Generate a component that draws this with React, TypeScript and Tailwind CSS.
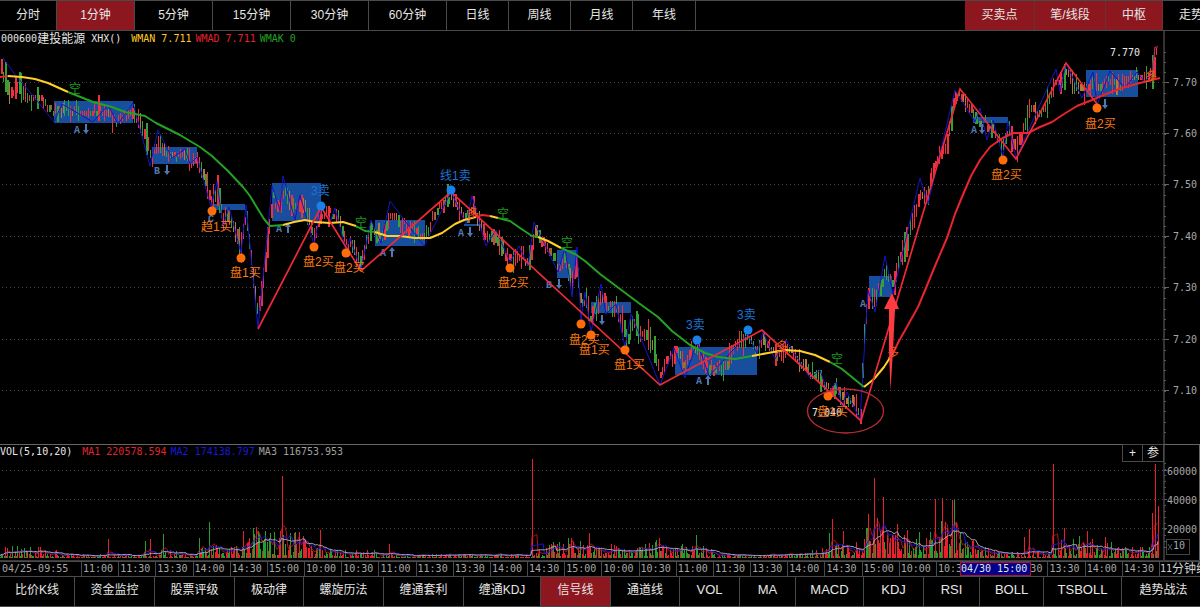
import { useState } from 'react';
import { clsx } from 'clsx';

type Point = [number, number];

const PERIODS = [
  { label: '分时', width: 'w-[57px]' },
  { label: '1分钟', width: 'w-[78px]' },
  { label: '5分钟', width: 'w-[78px]' },
  { label: '15分钟', width: 'w-[78px]' },
  { label: '30分钟', width: 'w-[78px]' },
  { label: '60分钟', width: 'w-[78px]' },
  { label: '日线', width: 'w-[62px]' },
  { label: '周线', width: 'w-[62px]' },
  { label: '月线', width: 'w-[62px]' },
  { label: '年线', width: 'w-[63px]' },
];

const OVERLAYS = [
  { label: '买卖点', width: 'w-[70px]' },
  { label: '笔/线段', width: 'w-[71px]' },
  { label: '中枢', width: 'w-[57px]' },
];

const INDICATORS = [
  { label: '比价K线', width: 'w-[75px]' },
  { label: '资金监控', width: 'w-[80px]' },
  { label: '股票评级', width: 'w-[80px]' },
  { label: '极动律', width: 'w-[69px]' },
  { label: '螺旋历法', width: 'w-[80px]' },
  { label: '缠通套利', width: 'w-[80px]' },
  { label: '缠通KDJ', width: 'w-[77px]' },
  { label: '信号线', width: 'w-[70px]' },
  { label: '通道线', width: 'w-[69px]' },
  { label: 'VOL', width: 'w-[60px]', latin: true },
  { label: 'MA', width: 'w-[56px]', latin: true },
  { label: 'MACD', width: 'w-[68px]', latin: true },
  { label: 'KDJ', width: 'w-[60px]', latin: true },
  { label: 'RSI', width: 'w-[56px]', latin: true },
  { label: 'BOLL', width: 'w-[64px]', latin: true },
  { label: 'TSBOLL', width: 'w-[78px]', latin: true },
  { label: '趋势战法', width: 'w-[84px]' },
];

const TIMES = [
  '11:00', '11:30', '13:30', '14:00', '14:30', '15:00', '10:00', '10:30',
  '11:00', '11:30', '13:30', '14:00', '14:30', '15:00', '10:00', '10:30',
  '11:00', '11:30', '13:30', '14:00', '14:30', '15:00', '10:00', '10:30',
  '11:00', '11:30', '13:30', '14:00', '14:30',
];

const PRICES = ['7.70', '7.60', '7.50', '7.40', '7.30', '7.20', '7.10'];
const PRICE_TOP = 82.5;
const PRICE_GAP = 51.4;
const TICK = PRICE_GAP / 10;
const BAR = 1.24;

// Short strokes
const STROKES: Point[] = [
  [3, 58], [16, 76], [30, 92], [54, 122], [62, 104], [93, 122], [108, 105], [118, 124], [133, 103], [150, 166],
  [158, 130], [172, 158], [185, 149], [190, 164], [197, 157], [211, 207], [217, 182], [223, 226], [229, 207],
  [241, 253], [246, 205], [258, 328], [272, 186], [280, 210], [283, 176], [295, 220], [300, 195], [314, 245],
  [321, 208], [331, 220], [335, 208], [346, 250], [350, 238], [361, 270], [371, 220], [381, 243], [390, 201],
  [424, 246], [451, 192], [466, 224], [472, 196], [486, 246], [496, 230], [510, 262], [519, 246],
  [528, 266], [534, 222], [558, 272], [565, 248], [572, 297], [577, 247], [581, 320], [585, 292], [591, 332],
  [601, 284], [606, 314], [616, 304], [625, 347], [631, 314], [660, 385], [674, 348],
  [685, 378], [697, 341], [709, 376], [748, 334], [757, 354], [763, 332], [775, 359],
  [786, 340], [810, 378], [820, 370], [828, 394], [836, 382], [842, 406], [847, 392], [860, 420], [868, 290],
  [875, 312], [885, 256], [893, 294], [920, 178], [928, 204], [955, 90], [975, 122], [980, 108], [987, 140],
  [993, 120], [1003, 157], [1008, 121], [1016, 158], [1056, 69], [1060, 92], [1066, 63], [1082, 98], [1093, 72],
  [1097, 105], [1110, 71], [1125, 88], [1137, 72], [1145, 82], [1152, 72], [1155, 47],
];

// Middle of the price bars
const TREND: Point[] = [
  [0, 68], [4, 78], [10, 92], [20, 86], [27, 100], [36, 97], [42, 100], [50, 108], [56, 109], [75, 111], [100, 111],
  [108, 114], [114, 122], [122, 118], [128, 114], [134, 112], [140, 124], [147, 142], [151, 160], [158, 142],
  [166, 154], [172, 156], [185, 155], [192, 163], [197, 157], [205, 180], [211, 200], [217, 190], [223, 220],
  [229, 214], [234, 230], [241, 246], [246, 214], [251, 260], [258, 312], [263, 275], [272, 200], [280, 205],
  [284, 188], [290, 205], [297, 208], [303, 202], [309, 222], [314, 238], [321, 214], [331, 214], [337, 214],
  [346, 242], [353, 246], [361, 264], [366, 240], [372, 228], [381, 238], [390, 214], [399, 222], [411, 230],
  [420, 236], [427, 230], [434, 214], [444, 205], [451, 196], [458, 206], [466, 218], [473, 208], [480, 222],
  [486, 238], [496, 236], [504, 252], [510, 260], [519, 252], [528, 262], [534, 230], [541, 240], [550, 256],
  [558, 266], [565, 258], [572, 282], [577, 262], [581, 306], [586, 298], [591, 322], [597, 305], [602, 294],
  [608, 308], [616, 306], [622, 322], [627, 340], [634, 322], [640, 336], [646, 332], [654, 352], [660, 372],
  [668, 362], [676, 352], [685, 366], [692, 350], [697, 348], [704, 366], [712, 370], [725, 366], [735, 346],
  [748, 338], [757, 350], [763, 340], [770, 348], [778, 352], [790, 350], [802, 364], [814, 376], [822, 380],
  [828, 388], [838, 390], [846, 400], [853, 402], [860, 414], [864, 330], [868, 300], [875, 300], [882, 280],
  [887, 274], [893, 284], [900, 254], [908, 236], [914, 216], [920, 192], [926, 198], [934, 164], [942, 155],
  [948, 140], [954, 100], [960, 94], [968, 104], [976, 120], [984, 122], [992, 128], [1002, 148], [1008, 130],
  [1016, 150], [1024, 128], [1030, 108], [1038, 114], [1046, 106], [1054, 84], [1062, 84], [1067, 70], [1074, 84],
  [1084, 92], [1094, 82], [1100, 90], [1110, 80], [1122, 86], [1132, 76], [1146, 78], [1152, 70], [1156, 52],
];

const SEGMENTS: Point[] = [
  [258, 329], [321, 207], [361, 271], [451, 192], [660, 385], [762, 330], [861, 421], [960, 89],
  [1016, 159], [1066, 63], [1097, 104],
];

const YELLOW = '#ffd028';
const GREEN = '#22a322';
const RED = '#e8242e';

const SIGNAL_LINE: { color: string; points: Point[] }[] = [
  { color: RED, points: [[0, 77], [8, 76]] },
  { color: YELLOW, points: [[8, 76], [22, 77], [35, 79], [48, 83], [68, 92]] },
  {
    color: GREEN,
    points: [
      [68, 92], [93, 102], [112, 107], [125, 112], [145, 116], [156, 123], [180, 135], [200, 147], [212, 156],
      [228, 171], [243, 187], [250, 196], [256, 206], [264, 219], [270, 226], [283, 225],
    ],
  },
  { color: YELLOW, points: [[283, 225], [294, 222], [305, 220], [315, 222], [330, 223], [343, 222], [356, 226]] },
  { color: GREEN, points: [[356, 226], [365, 231], [375, 232]] },
  {
    color: YELLOW,
    points: [[375, 232], [387, 236], [400, 236], [415, 238], [430, 238], [442, 233], [455, 224], [464, 220], [476, 217]],
  },
  { color: RED, points: [[476, 217], [482, 215], [490, 216]] },
  { color: YELLOW, points: [[490, 216], [498, 218]] },
  { color: GREEN, points: [[498, 218], [510, 221], [520, 228], [532, 236], [538, 237]] },
  { color: YELLOW, points: [[538, 237], [548, 241], [561, 248]] },
  {
    color: GREEN,
    points: [
      [561, 248], [575, 254], [585, 261], [600, 274], [620, 289], [640, 304], [658, 317], [672, 331], [690, 345],
      [705, 353], [718, 357], [735, 359], [752, 356],
    ],
  },
  { color: YELLOW, points: [[752, 356], [768, 353], [785, 350], [800, 351], [815, 355], [830, 362]] },
  { color: GREEN, points: [[830, 362], [842, 369], [853, 378], [864, 387]] },
  { color: YELLOW, points: [[864, 387], [874, 379], [884, 367], [893, 353]] },
  {
    color: RED,
    points: [
      [893, 353], [899, 341], [908, 325], [918, 307], [926, 288], [935, 266], [947, 238], [955, 214], [962, 197],
      [971, 176], [980, 160], [990, 147], [1001, 139], [1013, 133], [1028, 133], [1040, 127], [1052, 122],
      [1064, 114], [1077, 106], [1092, 100], [1106, 94], [1122, 88], [1140, 83], [1160, 78],
    ],
  },
];

// x, y, width, height
const HUBS = [
  [54, 101, 79, 22], [152, 147, 45, 17], [212, 204, 33, 6], [272, 183, 49, 38], [375, 220, 50, 26],
  [464, 224, 18, 2], [557, 250, 20, 28], [591, 302, 40, 11], [675, 347, 82, 28], [869, 276, 23, 21],
  [973, 117, 35, 6], [1086, 70, 52, 27],
];

const BUYS = [
  { x: 212, y: 211, label: '趋1买', lx: 201, ly: 231 },
  { x: 241, y: 258, label: '盘1买', lx: 230, ly: 277 },
  { x: 314, y: 247, label: '盘2买', lx: 303, ly: 266 },
  { x: 346, y: 253, label: '盘2买', lx: 334, ly: 272 },
  { x: 510, y: 268, label: '盘2买', lx: 498, ly: 287 },
  { x: 581, y: 324, label: '盘2买', lx: 569, ly: 344 },
  { x: 591, y: 335, label: '盘1买', lx: 579, ly: 354 },
  { x: 625, y: 350, label: '盘1买', lx: 614, ly: 369 },
  { x: 828, y: 396, label: '盘1买', lx: 817, ly: 416 },
  { x: 1003, y: 160, label: '盘2买', lx: 991, ly: 179 },
  { x: 1097, y: 108, label: '盘2买', lx: 1085, ly: 128 },
];

const SELLS = [
  { x: 321, y: 206, label: '3卖', lx: 311, ly: 195 },
  { x: 451, y: 190, label: '线1卖', lx: 440, ly: 180 },
  { x: 697, y: 340, label: '3卖', lx: 686, ly: 329 },
  { x: 748, y: 330, label: '3卖', lx: 737, ly: 319 },
];

const SHORTS: Point[] = [[69, 93], [355, 227], [497, 218], [561, 247], [831, 363]];
const LONGS: Point[] = [[467, 218], [776, 351], [887, 357], [1145, 81]];

const GRADES: { text: string; x: number; y: number; arrow?: number; up?: boolean }[] = [
  { text: 'A', x: 74, y: 133, arrow: 86 },
  { text: 'B', x: 154, y: 174, arrow: 167 },
  { text: 'C', x: 208, y: 222 },
  { text: 'A', x: 276, y: 232, arrow: 288, up: true },
  { text: 'A', x: 380, y: 256, arrow: 392, up: true },
  { text: 'A', x: 458, y: 236, arrow: 470 },
  { text: 'B', x: 546, y: 288, arrow: 559 },
  { text: '', x: 591, y: 324, arrow: 602 },
  { text: 'A', x: 696, y: 384, arrow: 708, up: true },
  { text: 'A', x: 860, y: 307 },
  { text: 'A', x: 971, y: 133, arrow: 982 },
  { text: '', x: 1094, y: 108, arrow: 1105 },
];

const VOLUME_LEVELS: Point[] = [
  [0, 9], [40, 8], [60, 5], [85, 3], [140, 2], [150, 8], [170, 6], [190, 4], [215, 12], [240, 10], [255, 20],
  [300, 19], [312, 8], [340, 6], [375, 6], [400, 3], [520, 3], [540, 7], [560, 15], [600, 13], [620, 8],
  [660, 12], [680, 9], [700, 10], [720, 3], [800, 3], [825, 9], [860, 14], [868, 28], [895, 22], [925, 20],
  [955, 34], [962, 18], [985, 8], [1010, 5], [1045, 6], [1065, 15], [1085, 14], [1110, 14], [1125, 8],
  [1145, 10], [1150, 20], [1160, 30],
];

// x, height, rising
const SPIKES: [number, number, boolean][] = [
  [108, 19, true], [145, 17, false], [150, 19, true], [163, 24, false], [199, 20, false], [209, 36, false],
  [243, 27, true], [253, 30, false], [256, 31, true], [282, 82, true], [294, 25, true], [320, 28, true],
  [389, 14, true], [532, 99, true], [553, 16, false], [571, 20, true], [580, 17, false], [589, 25, true],
  [656, 18, false], [659, 20, true], [682, 14, false], [696, 23, false], [829, 25, false], [832, 39, true],
  [843, 27, true], [866, 30, false], [868, 44, true], [874, 80, true], [877, 40, true], [883, 61, true],
  [897, 34, true], [907, 28, true], [935, 59, true], [942, 60, true], [952, 58, true], [954, 58, false],
  [1024, 21, true], [1029, 29, true], [1053, 94, true], [1064, 30, true], [1079, 22, false], [1087, 27, true],
  [1105, 21, true], [1152, 45, true], [1155, 94, true], [1158, 52, true],
];

function createRandom(seed: number) {
  let s = seed;
  return () => {
    s = (s * 16807) % 2147483647;
    return s / 2147483647;
  };
}

function valueAt(points: Point[], x: number) {
  for (let i = 1; i < points.length; i++) {
    const [x0, y0] = points[i - 1];
    const [x1, y1] = points[i];
    if (x <= x1) return y0 + ((y1 - y0) * (x - x0)) / (x1 - x0);
  }
  return points[points.length - 1][1];
}

const toPoints = (points: Point[]) => points.map((p) => p.join(',')).join(' ');

function buildCandles() {
  const random = createRandom(71);
  const candles: { x: number; y: number; w: number; h: number; color: string }[] = [];
  for (let x = 1; x < 1157; x += BAR * 1.6) {
    const y = valueAt(TREND, x);
    const slope = valueAt(TREND, x + 2) - y;
    const mid = PRICE_TOP + Math.round((y - PRICE_TOP + (random() - 0.5) * 6) / TICK) * TICK;
    const h = (1 + Math.floor(random() * random() * 5)) * TICK + Math.min(Math.abs(slope), 10);
    const roll = random() + (slope > 0 ? -0.1 : 0.15);
    const color = roll > 0.46 ? '#f0303c' : roll > 0.12 ? '#35a035' : '#b07c38';
    candles.push({
      x: Math.round(x),
      y: Math.round(mid - h / 2),
      w: random() > 0.72 ? 2 : 1,
      h: Math.round(h),
      color,
    });
  }
  return candles;
}

function buildVolumes() {
  const random = createRandom(2024);
  const bars = Array.from({ length: 935 }, (_, i) => {
    const x = i * BAR;
    const h = valueAt(VOLUME_LEVELS, x) * (0.15 + Math.pow(random(), 1.6) * 1.25);
    return { x, h, rising: random() > 0.45 };
  });
  SPIKES.forEach(([x, h, rising]) => {
    bars[Math.min(934, Math.round(x / BAR))] = { x, h, rising };
  });
  return bars;
}

const CANDLES = buildCandles();
const VOLUMES = buildVolumes();

function averageLine(period: number) {
  return VOLUMES.map((_, i) => {
    const slice = VOLUMES.slice(Math.max(0, i - period + 1), i + 1);
    const avg = slice.reduce((sum, bar) => sum + bar.h, 0) / slice.length;
    return `${(i * BAR).toFixed(1)},${(557 - avg).toFixed(1)}`;
  }).join(' ');
}

function PriceChart() {
  return (
    <svg
      viewBox="0 31 1200 413"
      className="block h-auto w-full font-['Liberation_Sans','Noto_Sans_CJK_SC',sans-serif]"
      role="img"
      aria-label="000600建投能源"
    >
      {/* Grid and axis */}
      {PRICES.map((price, i) => {
        const y = Math.round(PRICE_TOP + i * PRICE_GAP) - 0.5;
        return (
          <g key={price}>
            <line x1="2" x2="1163" y1={y} y2={y} stroke="#484848" strokeDasharray="1 3" />
            <line x1="1164" x2="1169" y1={y} y2={y} stroke="#666" />
            <text x="1173" y={y + 3} fill="#a8a8a8" className="font-['DejaVu_Sans_Mono',monospace] text-[10px]">
              {price}
            </text>
          </g>
        );
      })}
      {Array.from({ length: 38 }, (_, i) => {
        const y = Math.round(51.5 + i * TICK * 2) + 0.5;
        return <line key={i} x1="1164" x2="1166" y1={y} y2={y} stroke="#555" />;
      })}
      <line x1="1164" x2="1164" y1="31" y2="444" stroke="#666" />

      {/* Hubs */}
      {HUBS.map(([x, y, w, h]) => (
        <rect key={x} x={x} y={y} width={w} height={h} fill="#184e9e" />
      ))}

      {/* Bars */}
      <g shapeRendering="crispEdges">
        {CANDLES.map((c, i) => (
          <rect key={i} x={c.x} y={c.y} width={c.w} height={c.h} fill={c.color} />
        ))}
      </g>
      <polyline points={toPoints(STROKES)} fill="none" stroke="#1414c8" />

      {/* Hub grades */}
      {GRADES.map((g) => (
        <g key={g.x} fill="#5078b4" stroke="none">
          <text x={g.x} y={g.y} className="font-['Liberation_Mono',monospace] text-[10px] font-bold">
            {g.text}
          </text>
          {g.arrow && (
            <path
              d={
                g.up
                  ? `M${g.arrow} ${g.y - 9}l3 4h-2v6h-2v-6h-2z`
                  : `M${g.arrow} ${g.y + 1}l3 -4h-2v-6h-2v6h-2z`
              }
            />
          )}
        </g>
      ))}

      {SIGNAL_LINE.map((line, i) => (
        <polyline
          key={i}
          points={toPoints(line.points)}
          fill="none"
          stroke={line.color}
          strokeWidth="2"
          strokeLinejoin="round"
        />
      ))}
      <polyline points={toPoints(SEGMENTS)} fill="none" stroke="#ee2a36" strokeWidth="1.7" />
      <path d="M1152 80 1155 47h3" fill="none" stroke="#ee2a36" />

      {/* Signals */}
      <g className="text-xs">
        {SHORTS.map(([x, y]) => (
          <text key={x} x={x} y={y} fill="#1f991f">空</text>
        ))}
        {LONGS.map(([x, y]) => (
          <text key={x} x={x} y={y} fill="#f05a14">多</text>
        ))}
        <text x="812" y="416" fill="#e8e8e8" className="font-['DejaVu_Sans_Mono',monospace] text-[10px]">7.040</text>
        <text x="1110" y="56" fill="#e8e8e8" className="font-['DejaVu_Sans_Mono',monospace] text-[10px]">7.770</text>
        {BUYS.map((p) => (
          <g key={p.x} fill="#f57a10">
            <circle cx={p.x} cy={p.y} r="4.5" fill="#ff6c0a" />
            <text x={p.lx} y={p.ly}>{p.label}</text>
          </g>
        ))}
        {SELLS.map((p) => (
          <g key={p.x} fill="#1c74d4">
            <circle cx={p.x} cy={p.y} r="4.5" fill="#1a80ea" />
            <text x={p.lx} y={p.ly}>{p.label}</text>
          </g>
        ))}
      </g>

      <ellipse cx="845.5" cy="411" rx="38" ry="22" fill="none" stroke="#b82c38" strokeWidth="1.3" />
      <path d="M892 293 899 309H895L893 350 890.5 391 889 350V309H884Z" fill="#ff3a40" />
    </svg>
  );
}

function VolumeChart() {
  return (
    <svg viewBox="0 444 1200 117" className="block h-auto w-full" role="img" aria-label="VOL">
      <path d="M0 444.5H1200M1164 444V561M1199.5 444V561" stroke="#666" />
      {['60000', '40000', '20000'].map((label, i) => {
        const y = 470.5 + i * 29;
        return (
          <g key={label}>
            <line x1="2" x2="1163" y1={y} y2={y} stroke="#484848" strokeDasharray="1 3" />
            <line x1="1164" x2="1167" y1={y} y2={y} stroke="#666" />
            <text x="1167" y={y + 4} fill="#a8a8a8" className="font-['DejaVu_Sans_Mono',monospace] text-[10px]">
              {label}
            </text>
          </g>
        );
      })}
      {Array.from({ length: 15 }, (_, i) => (
        <line key={i} x1="1164" x2="1166" y1={463.5 + i * 6} y2={463.5 + i * 6} stroke="#555" />
      ))}
      <rect x="1166.5" y="539.5" width="23" height="15" fill="#000" stroke="#444" />
      <path d="M1168 544l4 6m0-6l-4 6" stroke="#555" />
      <text x="1173" y="549" fill="#a8a8a8" className="font-['DejaVu_Sans_Mono',monospace] text-[10px]">10</text>

      <g shapeRendering="crispEdges">
        {VOLUMES.map((bar, i) => {
          const h = Math.max(1, Math.round(bar.h));
          return (
            <rect
              key={i}
              x={Math.round(bar.x)}
              y={558 - h}
              width="1"
              height={h}
              fill={bar.rising ? '#e8202c' : '#22a02c'}
            />
          );
        })}
      </g>
      <polyline points={averageLine(5)} fill="none" stroke="#d01c24" strokeWidth="0.8" />
      <polyline points={averageLine(10)} fill="none" stroke="#1818e0" />
      <polyline points={averageLine(20)} fill="none" stroke="#a8a8b4" />
      <path d="M0 560.5H1200" stroke="#3a3a3a" />
    </svg>
  );
}

export default function App() {
  const [period, setPeriod] = useState('1分钟');
  const [indicator, setIndicator] = useState('信号线');
  const [overlays, setOverlays] = useState(['买卖点', '笔/线段', '中枢']);

  const toggleOverlay = (label: string) => {
    setOverlays((prev) => (prev.includes(label) ? prev.filter((o) => o !== label) : [...prev, label]));
  };

  return (
    <div className="min-h-screen overflow-hidden bg-black font-['Liberation_Sans','Noto_Sans_CJK_SC',sans-serif] text-xs text-[#e6e6e6]">
      {/* Periods */}
      <nav className="flex h-[31px] overflow-hidden border-y border-[#4a4a4a] whitespace-nowrap">
        {PERIODS.map((p) => (
          <button
            key={p.label}
            type="button"
            aria-pressed={p.label === period}
            onClick={() => setPeriod(p.label)}
            className={clsx(
              'shrink-0 border-r border-[#4a4a4a] pb-0.5',
              p.width,
              p.label === period && 'bg-[#8c171f]'
            )}
          >
            {p.label}
          </button>
        ))}
        <div className="flex-1" />
        {OVERLAYS.map((o) => (
          <button
            key={o.label}
            type="button"
            aria-pressed={overlays.includes(o.label)}
            onClick={() => toggleOverlay(o.label)}
            className={clsx(
              'shrink-0 border-r border-[#6a3034] pb-0.5',
              o.width,
              overlays.includes(o.label) && 'bg-[#8c171f]'
            )}
          >
            {o.label}
          </button>
        ))}
        <button type="button" className="w-[37px] shrink-0 overflow-hidden pb-0.5 pl-4 text-left">
          走势
        </button>
      </nav>

      <main>
        <section className="relative">
          <PriceChart />
          <div className="absolute top-0 left-px flex h-[15px] items-center gap-2.5 font-['DejaVu_Sans_Mono','Noto_Sans_CJK_SC',monospace] text-[10px] leading-none">
            <h1 className="flex items-center">
              000600<span className="text-xs leading-none">建投能源</span>
              <span className="ml-1.5">XHX()</span>
            </h1>
            <div className="flex gap-1">
              <span className="text-[#ffc828]">WMAN 7.711</span>
              <span className="text-[#e0242e]">WMAD 7.711</span>
              <span className="text-[#22a022]">WMAK 0</span>
            </div>
          </div>
        </section>

        <section className="relative">
          <VolumeChart />
          <div className="absolute top-0 left-0 flex h-[15px] items-center gap-2.5 font-['DejaVu_Sans_Mono',monospace] text-[10px] leading-none">
            <h2>VOL(5,10,20)</h2>
            <div className="flex gap-1">
              <span className="text-[#e0242e]">MA1 220578.594</span>
              <span className="text-[#1818d8]">MA2 174138.797</span>
              <span className="text-[#a0a0a0]">MA3 116753.953</span>
            </div>
          </div>
          <div className="absolute top-0 right-9 flex border border-[#4a4a4a] bg-black leading-none">
            <button type="button" aria-label="+" className="h-4 w-5 border-r border-[#4a4a4a]">+</button>
            <button type="button" className="h-4 w-5">参</button>
          </div>
        </section>

        {/* Time axis */}
        <div className="relative flex h-[15px] items-center overflow-hidden border-t border-[#4a4a4a] font-['DejaVu_Sans_Mono','Noto_Sans_CJK_SC',monospace] text-[10px] leading-none whitespace-nowrap text-[#a8a8a8]">
          <div className="w-[81px] shrink-0 pl-0.5">04/25-09:55</div>
          {TIMES.map((time, i) => (
            <div key={i} className="h-full min-w-0 flex-1 overflow-hidden border-l border-[#4a4a4a] pt-0.5 pl-px">
              {time}
            </div>
          ))}
          <div className="flex h-full w-[41px] shrink-0 items-center border-l border-[#4a4a4a] text-[#d0d0d0]">
            11<span className="text-xs leading-none">分钟线</span>
          </div>
          <div className="absolute top-0 left-[80%] h-full w-[71px] border border-[#b01020] bg-[#00008c] pt-px text-[#e6e6e6]">
            04/30 15:00
          </div>
        </div>
      </main>

      {/* Indicators */}
      <nav className="flex h-[31px] overflow-hidden border-y border-[#4a4a4a] whitespace-nowrap">
        {INDICATORS.map((item) => (
          <button
            key={item.label}
            type="button"
            aria-pressed={item.label === indicator}
            onClick={() => setIndicator(item.label)}
            className={clsx(
              'shrink-0 border-r border-[#4a4a4a] pb-1',
              item.width,
              item.latin && 'text-[13px]',
              item.label === indicator && 'bg-[#8c171f]'
            )}
          >
            {item.label}
          </button>
        ))}
      </nav>
    </div>
  );
}
